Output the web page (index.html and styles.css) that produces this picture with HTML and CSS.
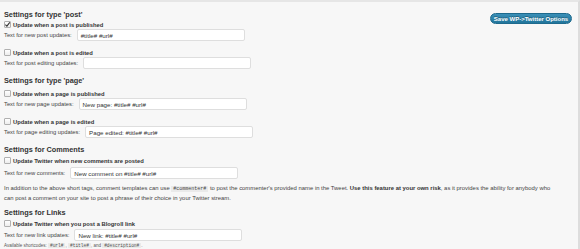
FILE: index.html
```html
<!DOCTYPE html>
<html>
<head>
<meta charset="utf-8">
<link rel="stylesheet" href="styles.css">
</head>
<body>
<div class="wrap">
  <button class="save">Save WP-&gt;Twitter Options</button>

  <h3 class="h h-post">Settings for type 'post'</h3>
  <div class="cbrow"><span class="cb"><svg viewBox="0 0 7 7" width="7" height="7"><path d="M1.3 3.6 L2.9 5.2 L5.8 1.4" fill="none" stroke="#333" stroke-width="1.1"/></svg></span><span class="lbl">Update when a post is published</span></div>
  <div class="trow"><span class="tl">Text for new post updates:</span><span class="inp">#title# #url#</span></div>
  <div class="cbrow gap"><span class="cb"></span><span class="lbl">Update when a post is edited</span></div>
  <div class="trow"><span class="tl">Text for post editing updates:</span><span class="inp"></span></div>

  <h3 class="h h-page">Settings for type 'page'</h3>
  <div class="cbrow after-page"><span class="cb"></span><span class="lbl">Update when a page is published</span></div>
  <div class="trow"><span class="tl">Text for new page updates:</span><span class="inp">New page: #title# #url#</span></div>
  <div class="cbrow gap"><span class="cb"></span><span class="lbl">Update when a page is edited</span></div>
  <div class="trow"><span class="tl">Text for page editing updates:</span><span class="inp">Page edited: #title# #url#</span></div>

  <h3 class="h h-comments">Settings for Comments</h3>
  <div class="cbrow after-h"><span class="cb"></span><span class="lbl">Update Twitter when new comments are posted</span></div>
  <div class="trow t-comments"><span class="tl">Text for new comments:</span><span class="inp">New comment on #title# #url#</span></div>
  <p class="note">In addition to the above short tags, comment templates can use <code>#commenter#</code> to post the commenter's provided name in the Tweet. <strong>Use this feature at your own risk</strong>, as it provides the ability for anybody who<br>can post a comment on your site to post a phrase of their choice in your Twitter stream.</p>

  <h3 class="h h-links">Settings for Links</h3>
  <div class="cbrow after-h"><span class="cb"></span><span class="lbl">Update Twitter when you post a Blogroll link</span></div>
  <div class="trow t-links"><span class="tl">Text for new link updates:</span><span class="inp">New link: #title# #url#</span></div>
  <div class="small">Available shortcodes: <code>#url#</code>, <code>#title#</code>, and <code>#description#</code>.</div>
</div>
</body>
</html>
```
FILE: styles.css
```css
html, body {
  margin: 0;
  padding: 0;
  background: #f7f7f7;
}
.wrap {
  height: 247px;
  width: 574px;
  padding: 0 0 0 4px;
  border-top: 2px solid #e6e6e6;
  border-right: 2px solid #dddddd;
  background: #f7f7f7;
  font-family: "Liberation Sans", Arial, sans-serif;
  color: #333;
  overflow: hidden;
}
.save {
  float: right;
  box-sizing: border-box;
  margin: 11px 6px 0 0;
  height: 11px;
  width: 82px;
  padding: 0;
  border: 1px solid #1e6a8d;
  border-radius: 6px;
  background: linear-gradient(#3a8fb7, #21759b);
  color: #fff;
  font-family: "Liberation Sans", Arial, sans-serif;
  font-weight: bold;
  font-size: 6px;
  line-height: 8px;
  text-shadow: 0 -1px 0 rgba(0,0,0,0.3);
}
.h {
  margin: 0;
  font-size: 7.3px;
  line-height: 10px;
  height: 10px;
  font-weight: bold;
  color: #333;
}
.h-post { margin-top: 8px; }
.h-page { margin-top: 7px; }
.h-comments { margin-top: 7px; }
.h-links { margin-top: 5px; }
.cbrow {
  display: flex;
  align-items: center;
  height: 9px;
  gap: 2px;
}
.cbrow.gap { margin-top: 7px; }
.cbrow.after-page { margin-top: 3px; }
.cbrow.after-h { margin-top: 1px; }
.cb {
  display: flex;
  align-items: center;
  justify-content: center;
  width: 7px;
  height: 7px;
  box-sizing: border-box;
  border: 1px solid #b0b0b0;
  border-radius: 1px;
  background: linear-gradient(#ffffff, #ededed);
  overflow: hidden;
}
.cb svg { flex: none; }
.lbl {
  font-size: 5.8px;
  font-weight: bold;
  color: #333;
}
.trow {
  display: flex;
  align-items: center;
  height: 12px;
  gap: 5px;
}
.t-comments { margin-top: 2px; }
.t-links { margin-top: 1px; }
.tl {
  font-size: 5.8px;
  color: #444;
}
.inp {
  display: flex;
  align-items: center;
  width: 168px;
  height: 12px;
  box-sizing: border-box;
  border: 1px solid #dedede;
  border-radius: 2px;
  background: #fff;
  padding-left: 3px;
  font-size: 6.2px;
  color: #333;
}
.note {
  margin: 4px 0 0 0;
  font-size: 5.9px;
  line-height: 10px;
  color: #444;
  white-space: nowrap;
}
.note strong { color: #333; }
code {
  font-family: "Liberation Mono", monospace;
  font-size: 5px;
  line-height: 6px;
  background: #eaeaea;
  padding: 0 2px;
}
.small {
  font-size: 4.5px;
  line-height: 10px;
  color: #555;
}
.small code { font-size: 4.5px; }
```
